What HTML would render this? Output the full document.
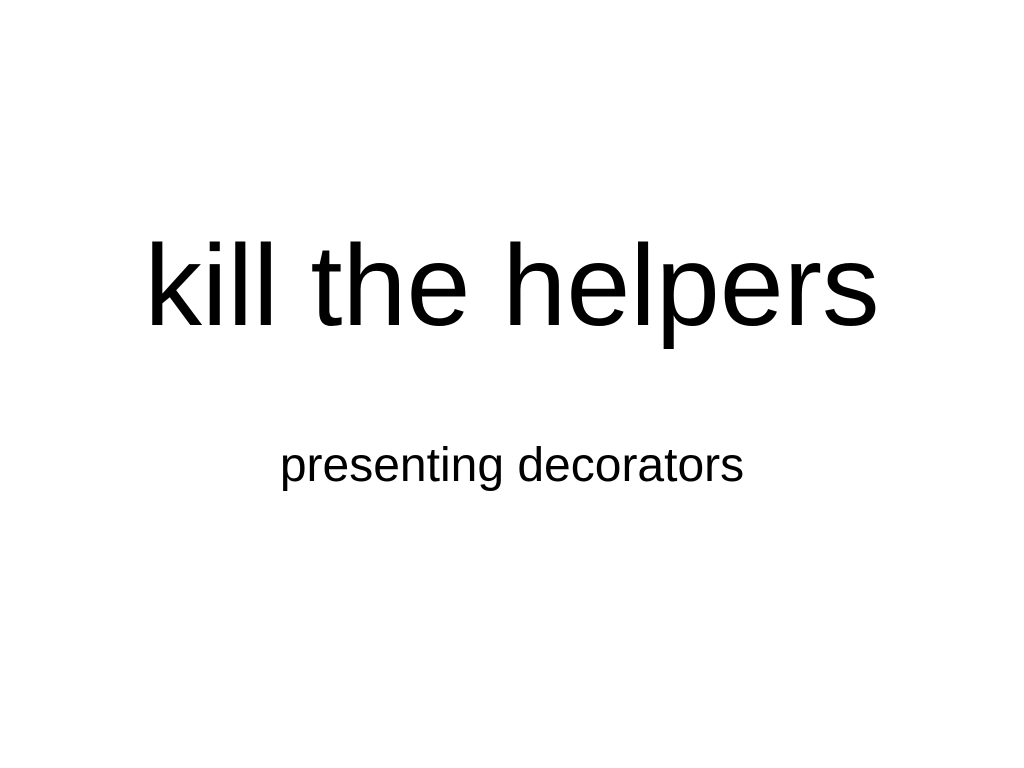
<!DOCTYPE html>
<html><head><meta charset="utf-8"><style>
html,body{margin:0;padding:0;background:#fff;width:1024px;height:768px;overflow:hidden}
.t{position:absolute;left:0;width:1024px;text-align:center;font-family:"Liberation Sans",sans-serif;color:#000;line-height:1;white-space:nowrap}
#a{top:229px;font-size:115px}
#b{top:442px;font-size:48px}
</style></head><body>
<div class="t" id="a">kill the helpers</div>
<div class="t" id="b">presenting decorators</div>
</body></html>
